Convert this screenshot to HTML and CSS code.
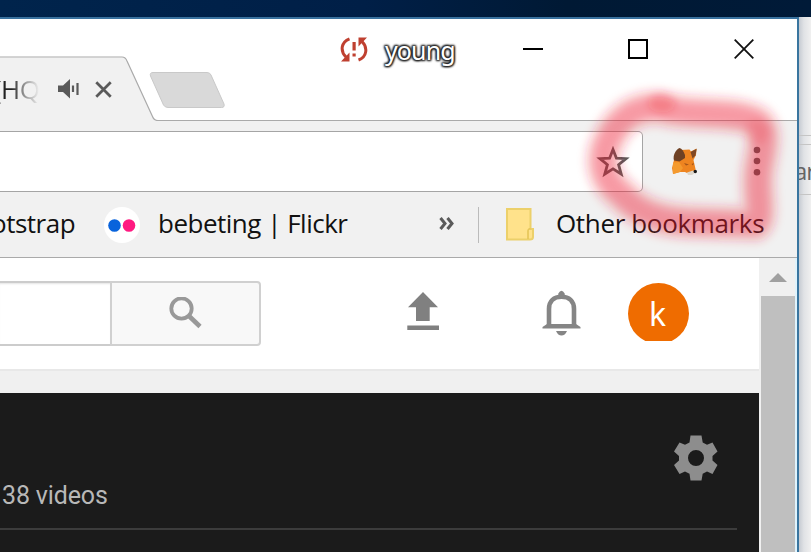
FILE: index.html
```html
<!DOCTYPE html>
<html lang="en">
<head>
<meta charset="utf-8">
<title>Browser window</title>
<link rel="stylesheet" href="styles.css">
</head>
<body>
<div class="desktop"></div>
<div class="stage">
  <div class="window">
    <div class="tabstrip">
      <svg class="tab-shape" width="340" height="102" viewBox="0 19 340 102">
        <path d="M0 57.5H122Q125.500 57.500 127 61L152.500 116.500Q154 120.500 158 120.500H340V122H0Z" fill="#f1f1f1"/>
        <path d="M0 57H122Q125.500 57 127 61L152.500 116.500Q154 120.500 158 120.500H340" fill="none" stroke="#aaa" stroke-width="1.200"/>
        <path d="M153 72.500H207Q210 72.500 211 75L224 104Q225 107.500 221.500 107.500H168Q165 107.500 163.500 105L150.500 76Q149.500 72.500 153 72.500Z" fill="#d9d9d9" stroke="#c9c9c9"/>
      </svg>
      <div class="tab">
        <span class="tab-title">(HQ</span>
        <svg class="speaker" width="22" height="20" viewBox="0 0 22 20"><path d="M0 6.500H5L12 0V19.500L5 13H0Z" fill="#5a5a5a"/><path d="M15 6.500V13M19.500 4V16" stroke="#5a5a5a" stroke-width="2.200"/></svg>
        <svg width="17" height="17" viewBox="0 0 16 16"><path d="M1.200 1.200L14.800 14.800M14.800 1.200L1.200 14.800" stroke="#5a5a5a" stroke-width="2.600"/></svg>
      </div>
      <div class="caption">
        <svg class="sync" width="28" height="25" viewBox="0 0 28 25"><g fill="none" stroke="#bf4030" stroke-width="3"><path d="M9.500 1.800C1 5 0 14 6 20"/><path d="M18.500 23C27 20 28 10.500 22 4.500"/></g><path d="M1 24.500H9.500V15.500ZM27 .5H18.500V9.500ZM12.500 5H15.700V13.500H12.500ZM12.500 16.500H15.700V19.500H12.500Z" fill="#bf4030"/></svg>
        <span class="profile">young</span>
        <svg class="minimize" width="20" height="20"><path d="M0 10H20" stroke="#000" stroke-width="2"/></svg>
        <svg class="maximize" width="20" height="20"><rect x="1" y="1" width="18" height="18" fill="none" stroke="#000" stroke-width="2"/></svg>
        <svg width="20" height="20"><path d="M.7 .7L19.300 19.300M19.300 .7L.7 19.300" stroke="#111" stroke-width="1.800"/></svg>
      </div>
    </div>
    <div class="toolbar">
      <div class="omnibox">
        <svg width="34" height="32" viewBox="0 0 34 32"><path d="M17 3.500L20.400 12.200L30 12.700L22.600 18.700L25.200 28L17 22.800L8.800 28L11.400 18.700L4 12.700L13.600 12.200Z" fill="none" stroke="#5a5a5a" stroke-width="2.800"/></svg>
      </div>
      <svg class="fox" width="27" height="28" viewBox="0 0 27 28">
        <path d="M3 13L9 3L18.500 2.500L20 4.500L25.500 1.500L25 8L22.500 13L24.500 22L24 26L16 26L14 25L9 25L2 27L1 21Z" fill="#ee8420"/>
        <path d="M3 13.500C1.500 9 4.500 2.500 8.500 1Q12 2 14 8L14 11L8.500 14.500Z" fill="#6e4124"/>
        <path d="M19.500 5L25.700 1.700L24.500 8.500L21.500 11.500Z" fill="#804824"/>
        <path d="M2 15.500L8 15L12 21L9 25L2 27Z" fill="#f49a2e"/>
        <path d="M13 16L18 17.500L15 18.500ZM20.500 17L23 16L22 18.500Z" fill="#a45519"/>
        <path d="M16 25.500L22 23.500L24.500 25.500L21 28H17Z" fill="#ddd6cb"/>
        <circle cx="24.300" cy="24.500" r="1.700" fill="#181818"/>
      </svg>
      <svg class="kebab" width="8" height="30" viewBox="0 0 8 30"><g fill="#5a5a5a"><circle cx="4" cy="4" r="3.300"/><circle cx="4" cy="15" r="3.300"/><circle cx="4" cy="26.300" r="3.300"/></g></svg>
    </div>
    <div class="bookmarks">
      <span class="bm-boot">otstrap</span>
      <svg class="flickr" width="36" height="36"><circle cx="18" cy="18" r="18" fill="#fff"/><circle cx="10.500" cy="18.500" r="6.300" fill="#0863dc"/><circle cx="25" cy="18.500" r="6.300" fill="#ff1981"/></svg>
      <span class="bm-flickr">bebeting | Flickr</span>
      <svg class="more" width="15" height="13" viewBox="0 0 15 13"><path d="M1.500 1L6 6.500L1.500 12M8.500 1L13 6.500L8.500 12" fill="none" stroke="#5a5a5a" stroke-width="3"/></svg>
      <span class="divider"></span>
      <svg class="folder" width="28" height="33" viewBox="0 0 28 33"><path d="M1 1H24.500V21H27V29Q27 31.500 24 31.500H1Z" fill="#ffe28b" stroke="#ecd06a" stroke-width="2"/><path d="M22 31V23Q22 20.500 24.500 21" fill="none" stroke="#e5c557" stroke-width="1.600"/></svg>
      <span class="bm-other">Other bookmarks</span>
    </div>
    <div class="viewport">
      <div class="page">
        <div class="masthead">
          <div class="search-input"></div>
          <div class="search-button">
            <svg width="33" height="33" viewBox="0 0 33 33"><circle cx="12.500" cy="11.500" r="10.200" fill="none" stroke="#999" stroke-width="3.800"/><path d="M20 19L31 29.500" stroke="#999" stroke-width="4.600"/></svg>
          </div>
          <svg class="upload" width="32" height="38" viewBox="0 0 32 38"><path d="M16 0L31 15.300H22.700V29H9V15.300H1ZM.3 33.500H32V38H.3Z" fill="#808080"/></svg>
          <svg class="bell" width="39" height="46" viewBox="0 0 39 46"><path d="M7 37V19C7 11 12 6.800 19.500 6.800S32 11 32 19V37" fill="none" stroke="#858585" stroke-width="4.600"/><path d="M16.300 7V3.500Q19.500-2 22.700 3.500V7ZM5 34H34L38.500 37V38.500H.5V37Z" fill="#858585"/><path d="M14 41H25Q23 45.500 19.500 45.500T14 41Z" fill="#858585"/></svg>
          <div class="avatar"><div class="disc">k</div></div>
        </div>
        <div class="band"></div>
        <div class="player">
          <svg class="gear" width="46" height="46" viewBox="0 0 46 46"><path fill-rule="evenodd" d="M17.500 .5H28.500L29.700 7.500L34 9.800L39.500 7.500L44.500 16.500L39.500 21V25.500L44.500 30L39.500 39L34 36.500L29.700 38.800L28.500 45.500H17.500L16.500 38.800L12 36.500L6.500 39L1 30L6 25.500V21L1 16.500L6.500 7.500L12 9.800L16.500 7.500ZM23 15A8 8 0 1 0 23 31A8 8 0 1 0 23 15Z" fill="#8d8d8d"/></svg>
          <div class="count">38 videos</div>
        </div>
      </div>
      <div class="scrollbar">
        <svg width="18" height="9"><path d="M0 9L9 0L18 9Z" fill="#a0a0a0"/></svg>
        <div class="thumb"></div>
      </div>
    </div>
  </div>
  <div class="behind"><div class="behind-bar"><span>ar</span></div></div>
</div>
<svg class="marker" width="231" height="190" viewBox="570 70 231 190">
  <defs>
    <filter id="soft" x="-20%" y="-20%" width="140%" height="140%"><feGaussianBlur stdDeviation="4.500"/></filter>
    <path id="loop" d="M660 108C635 106 618 120 609 139C598 160 603 180 622 195C638 213 661 221 690 222L755 224C764 216 755 190 759 168C763 145 770 124 749 119C726 111 686 116 660 108Z"/>
  </defs>
  <g filter="url(#soft)" fill="none" stroke="#ee1c2c" stroke-linejoin="round">
    <use href="#loop" stroke-width="36" stroke-opacity=".22"/>
    <use href="#loop" stroke-width="21" stroke-opacity=".28"/>
    <ellipse cx="662" cy="103" rx="14" ry="10" fill="#ee1c2c" fill-opacity=".25" stroke="none"/>
    <ellipse cx="757" cy="132" rx="12" ry="12" fill="#ee1c2c" fill-opacity=".15" stroke="none"/>
  </g>
</svg>
</body>
</html>
```
FILE: styles.css
```css
* { box-sizing: border-box; }
body {
  margin: 0;
  width: 811px;
  height: 552px;
  overflow: hidden;
  background: #f0f0f0;
  font-family: "Noto Sans", "Open Sans", sans-serif;
  color: #111;
}
svg { display: block; flex: none; }
span { white-space: nowrap; }
.desktop { height: 17px; background: linear-gradient(90deg, #00244c, #001f47 45%, #001934 70%, #001a38); }
.stage { display: flex; height: 535px; }
.window {
  width: 799px;
  flex: none;
  border-top: 2px solid #39729f;
  border-right: 2px solid #39759f;
  background: #f1f1f1;
}
.tabstrip {
  height: 102px;
  display: grid;
  background: #fff;
  border-bottom: 1px solid #aaa;
}
.tabstrip > * { grid-area: 1 / 1; }
.tab-shape { height: 102px; }
.tab { display: flex; align-items: center; height: 36px; margin-top: 52px; }
.tab-title {
  width: 46px;
  margin-left: -6px;
  font: 26px/36px "Open Sans", sans-serif;
  letter-spacing: -.6px;
  background: linear-gradient(90deg, #222 38%, #888 62%, #eee 98%);
  background-clip: text;
  -webkit-background-clip: text;
  color: transparent;
}
.speaker { margin: 0 15px 0 18px; }
.caption { display: flex; align-items: center; height: 60px; padding-left: 340px; }
.profile {
  width: 71px;
  margin: 2px 68px 0 17px;
  font-size: 25px;
  letter-spacing: -.9px;
  color: #fff;
  text-shadow: 0 0 2px #222, 1px 1px 2px #222, -1px -1px 2px #222, 1px -1px 2px #333, -1px 1px 2px #333, 0 0 3px #444;
}
.minimize { margin-right: 85px; margin-left: -1px; }
.maximize { margin-right: 86px; }
.toolbar { display: flex; height: 71px; padding-top: 10px; }
.omnibox {
  width: 643px;
  height: 61px;
  display: flex;
  align-items: center;
  justify-content: flex-end;
  padding-right: 12px;
  background: #fff;
  border: 1px solid #a5a5a5;
  border-left: 0;
  border-radius: 0 5px 5px 0;
}
.fox { margin: 16px 55px 0 28px; }
.kebab { margin-top: 15px; }
.bookmarks {
  height: 66px;
  display: flex;
  align-items: center;
  font: 26px/36px "Open Sans", "Noto Sans", sans-serif;
  border-bottom: 1px solid #aaa;
}
.bookmarks span { flex: none; margin-bottom: 3px; }
.bookmarks .bm-boot { width: 84px; margin-left: -9px; letter-spacing: -.5px; }
.flickr { margin: 0 18px 0 29px; }
.bm-flickr { width: 191px; letter-spacing: -.5px; }
.more { margin: 0 24px 3px 90px; }
.bookmarks .divider { width: 1px; height: 36px; margin-bottom: 0; background: #bbb; }
.folder { margin: 0 22px 0 27px; }
.bm-other { letter-spacing: -.35px; }
.viewport { display: flex; height: 294px; }
.page { width: 759px; background: #fff; flex: none; }
.masthead { height: 113px; display: flex; align-items: flex-start; padding-top: 23px; border-bottom: 2px solid #e8e8e8; }
.search-input {
  width: 110px;
  height: 65px;
  border: 2px solid #ccc;
  border-width: 2px 0;
  box-shadow: inset 0 2px 2px -1px #e4e4e4;
}
.search-button {
  width: 151px;
  height: 65px;
  padding: 14px 0 0 57px;
  border: 2px solid #d0d0d0;
  border-radius: 0 4px 4px 0;
  background: #f8f8f8;
}
.upload { margin: 11px 0 0 146px; }
.bell { margin: 9px 0 0 103px; }
.avatar { width: 61px; height: 58px; margin: 2px 0 0 47px; overflow: hidden; }
.disc {
  height: 61px;
  border-radius: 50%;
  background: #ef6c00;
  color: #fff;
  font-size: 32px;
  line-height: 61px;
  text-align: center;
  text-indent: -2px;
}
.band { height: 22px; background: #f0f0f0; }
.player { height: 159px; background: #1b1b1b; padding-top: 42px; }
.gear { margin-left: 673px; }
.count {
  width: 737px;
  height: 49px;
  padding-left: 2px;
  border-bottom: 2px solid #3c3c3c;
  font: 25px/30px Roboto, sans-serif;
  letter-spacing: -.15px;
  color: #b8b8b8;
}
.scrollbar { width: 38px; border-right: 2px solid #dff3fc; background: #f0f0f0; }
.scrollbar svg { margin: 15px 0 14px 10px; }
.thumb { height: 256px; margin-left: 2px; background: #bfbfbf; }
.behind { width: 12px; padding-top: 118px; background: linear-gradient(90deg, #c6cbd2, #e0e2e5 40%, #f0f0f0); overflow: hidden; }
.behind::before { content: ""; display: block; height: 1px; margin-bottom: 8px; background: #c5c5c5; }
.behind-bar {
  height: 51px;
  border: 1px solid #c5c5c5;
  border-width: 1px 0;
  font: 24px/52px "Open Sans", sans-serif;
  letter-spacing: -1px;
  color: #656565;
  overflow: hidden;
}
.behind-bar span { margin-left: -5px; }
.marker { position: absolute; left: 570px; top: 70px; pointer-events: none; }
```
